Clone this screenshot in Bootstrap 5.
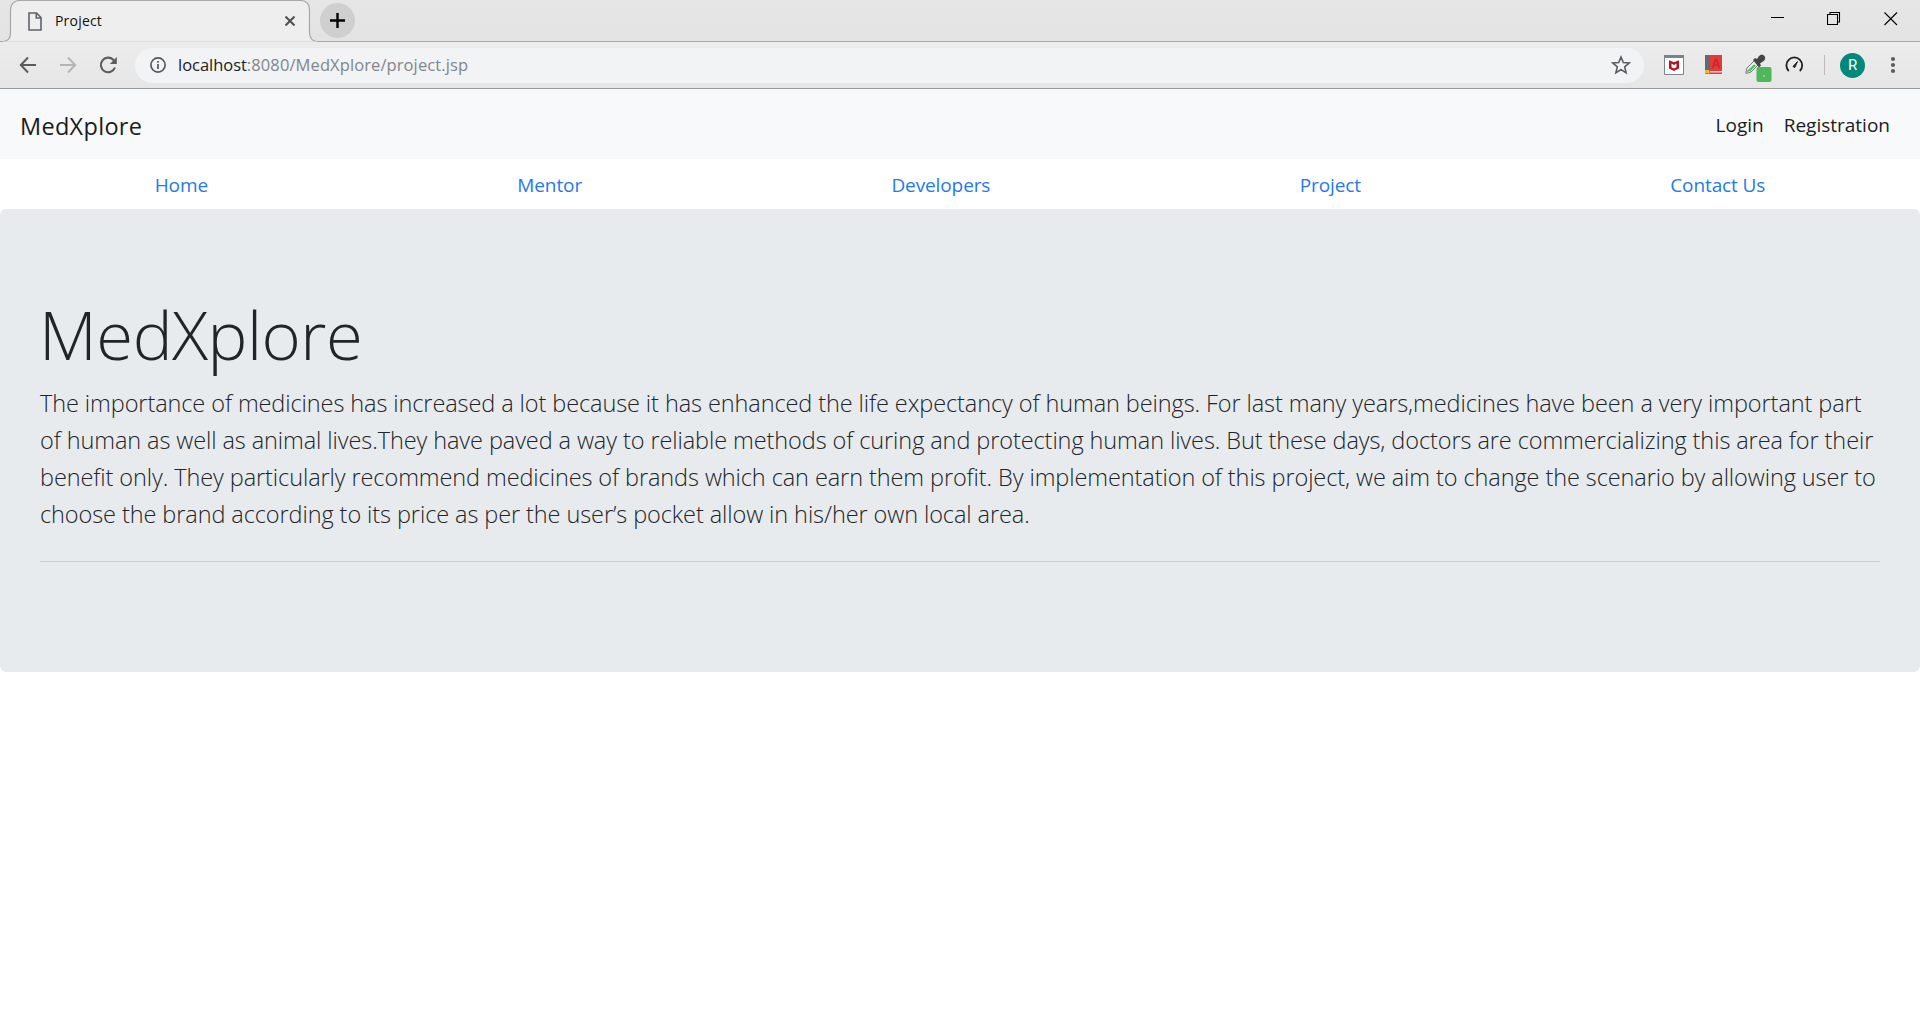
<!DOCTYPE html>
<html lang="en">
<head>
<meta charset="utf-8">
<meta name="viewport" content="width=device-width, initial-scale=1">
<title>Project</title>
<link href="https://cdn.jsdelivr.net/npm/bootstrap@5.3.0/dist/css/bootstrap.min.css" rel="stylesheet">
<style>
html{font-size:20px}
body{font-family:"Open Sans","Noto Sans",sans-serif;color:#212529;background:#fff;overflow:hidden}
svg{display:block;flex:none}
.tabstrip{height:42px;background:linear-gradient(#e6e6e6,#e3e3e3);border-bottom:1px solid #a8a8a8;line-height:1}
.tab-item{width:320px;height:42px;padding:0 25px 0 28px;margin-bottom:-1px;font-size:14px;color:#111}
.tab-frame{position:absolute;left:0;top:0}
.tab-title{letter-spacing:.2px;margin-left:13px}
.newtab{width:35px;height:35px;background:#cfcfcf;margin:3px 0 0 0}
.win-controls{gap:43px;padding-right:22px;height:37px}
.toolbar{height:47px;background:linear-gradient(#ececec,#e6e6e7);border-bottom:1px solid #98999c;padding-left:16px}
.nav-arrows{gap:16px}
.omnibox{height:35px;margin-left:15px;padding:0 13px 0 15px;border-radius:18px;background:#f1f3f5;font-size:16.5px;line-height:23px;color:#80868b}
.omnibox .host{color:#202124;letter-spacing:-.03px}
.omnibox .addr{margin-left:12px;padding-bottom:2px;letter-spacing:.1px;white-space:nowrap}
.extensions{width:276px;padding-left:20px}
.ext-next{margin-left:20px}
.ext-gauge{margin-left:12px}
.ext-menu{margin-left:25px}
.avatar-dot{width:25px;height:25px;background:#00897b;color:#fff;font:15px/25px Roboto,sans-serif;margin-left:15px}
.sep{width:1px;height:20px;background:#bbb;margin-left:20px}
.site-bar{height:70px;background:#f8f9fa;padding:10px 20px}
.site-bar .navbar-brand{font-size:23.5px;letter-spacing:.3px;color:#1b1c1d;padding-top:8px;padding-bottom:4px;line-height:36px}
.site-bar .nav-link{font-size:19px;line-height:30px;color:#1b1c1d;padding:11px 10px 9px}
.site-nav .nav-link{font-size:19px;line-height:30px;padding:11px 20px 9px;color:#2479ee;letter-spacing:-.1px}
.jumbo{background:#e8ebee;border-radius:6px;padding:80px 40px;height:463px}
.jumbo h1{font-size:67px;font-weight:300;line-height:84px;letter-spacing:-.5px;padding-top:3px;margin:0 0 9px -1px}
.jumbo p{font-size:23.5px;font-weight:300;line-height:37px;letter-spacing:-.09px;white-space:nowrap;margin:0}
.jumbo hr{margin:28px 0 0;border-top:1px solid #c9cdd0;opacity:1}
</style>
</head>
<body>
<header>
  <div class="tabstrip d-flex">
    <div class="tab-item position-relative d-flex align-items-center">
      <svg class="tab-frame" width="320" height="42" fill="#eeeeee" stroke="#a8a8a8" stroke-width="1.2"><path d="M0 41.5H3Q10.5 41 10.500 33V10Q11 .5 20 .5H300Q309.500 .5 309.500 10V33Q310 41 317 41.500H320" /><path d="M3 42h314" stroke="#eeeeee" stroke-width="1.2"/></svg>
      <svg class="position-relative" width="14" height="19" fill="none" stroke="#5f6368" stroke-width="1.6"><path d="M1 1h7.500L13 5.500V18H1zM8.300 1v5H13"/></svg>
      <span class="tab-title position-relative">Project</span>
      <svg class="position-relative ms-auto" width="10" height="10" stroke="#4d5053" stroke-width="2"><path d="M.5 .5l9 9M9.500 .5l-9 9"/></svg>
    </div>
    <div class="newtab rounded-circle d-flex align-items-center justify-content-center">
      <svg width="15" height="15" stroke="#000" stroke-width="2.400"><path d="M7.500 0v15M0 7.500h15"/></svg>
    </div>
    <div class="win-controls d-flex align-items-center ms-auto">
      <svg width="14" height="14" stroke="#000"><path d="M1 5.500h13"/></svg>
      <svg width="14" height="14" fill="none" stroke="#000" stroke-width="1.100"><path d="M.5 2.500h10v10H.5zM3 2.500V.5h9.500v9.500H10.500"/></svg>
      <svg width="14" height="14" stroke="#000" stroke-width="1.100"><path d="M.5 .5l12.500 12.500M13 .5l-12.500 12.500"/></svg>
    </div>
  </div>
  <div class="toolbar d-flex align-items-center">
    <div class="nav-arrows d-flex">
      <svg width="24" height="24" fill="none" stroke="#5a5d60" stroke-width="2"><path d="M20 12H5.500M12 4.500L4.800 12l7.200 7.500"/></svg>
      <svg width="24" height="24" fill="none" stroke="#b4b5b7" stroke-width="2"><path d="M4 12h14.500M12 4.500l7.200 7.500-7.200 7.500"/></svg>
      <svg width="24" height="24" fill="none" stroke="#5a5d60" stroke-width="2.100"><path d="M19 14.500A7.300 7.300 0 1 1 17.300 6.700L19 8.500"/><path d="M20.800 4v7h-7z" fill="#5a5d60" stroke="none"/></svg>
    </div>
    <div class="omnibox d-flex align-items-center flex-grow-1">
      <svg width="16" height="16" fill="none" stroke="#55585c" stroke-width="1.700"><circle cx="8" cy="8" r="7.100"/><path d="M8 7v5M8 4v1.800"/></svg>
      <span class="addr"><span class="host">localhost</span>:8080/MedXplore/project.jsp</span>
      <svg class="ms-auto" width="20" height="20" fill="none" stroke="#5a5d60" stroke-width="1.600"><path d="M10 2l2.300 5.500 5.900.5-4.500 3.900 1.400 5.800L10 14.600l-5.100 3.100 1.400-5.800L1.800 8l5.900-.5z"/></svg>
    </div>
    <div class="extensions d-flex align-items-center">
      <svg width="20" height="20"><path d="M.5 .5h19v19H.5z" fill="#fff" stroke="#7d858b"/><path d="M0 0h20v3H0z" fill="#72868f"/><path d="M5 5.300l5 2 5-2v8.200L10 16l-5-2.500zM7.500 8.600v3.700L10 13.500l2.500-1.200V8.600L10 9.900z" fill="#b3141d" fill-rule="evenodd"/></svg>
      <svg class="ext-next" width="20" height="20"><path d="M1 0h17v19H1z" fill="#e53a36"/><path d="M1 0h5v17H1z" fill="#656970"/><path d="M6 16h12v1.500H5z" fill="#f3d9d7"/><path d="M1 15h4v4l-2-1-2 1z" fill="#f3b62f"/><path d="M8.500 13L11.500 4.500h1L15.500 13M9.500 10h5" fill="none" stroke="#c42927" stroke-width="1.500"/></svg>
      <svg class="ext-next" width="28" height="36"><path d="M2 25l1-4 8-8 4 4-8 8-5 1.500z" fill="#e9eeea" stroke="#777" stroke-width="1"/><path d="M3 24l7-6.500 2 1L6.500 24 3 25z" fill="#4fbd62"/><path d="M9 13l2-2 2 1 2-3q3-3 5.500 0 2 3-1.500 5.500l-3 2 1 2-2 2z" fill="#434649"/><rect x="12.500" y="20" width="15" height="15" rx="2" fill="#4db858"/><circle cx="20" cy="29" r=".8" fill="#d8f0da"/></svg>
      <svg class="ext-gauge" width="20" height="20" fill="none" stroke="#1e1f20" stroke-width="1.800"><path d="M4.800 16A7.900 7.900 0 1 1 15.800 16"/><path d="M9 11.500l4.500-5-2.700 6z" fill="#1e1f20" stroke-width="1"/></svg>
      <div class="sep"></div>
      <div class="avatar-dot rounded-circle text-center">R</div>
      <svg class="ext-menu" width="6" height="18" fill="#5a5d60"><circle cx="3" cy="3" r="2.100"/><circle cx="3" cy="9" r="2.100"/><circle cx="3" cy="15" r="2.100"/></svg>
    </div>
  </div>
</header>

<nav class="navbar site-bar d-flex flex-nowrap align-items-center">
  <a class="navbar-brand" href="#">MedXplore</a>
  <div class="d-flex ms-auto">
    <a class="nav-link" href="#">Login</a>
    <a class="nav-link" href="#">Registration</a>
  </div>
</nav>

<ul class="nav nav-fill site-nav">
  <li class="nav-item"><a class="nav-link" href="#">Home</a></li>
  <li class="nav-item"><a class="nav-link" href="#">Mentor</a></li>
  <li class="nav-item"><a class="nav-link" href="#">Developers</a></li>
  <li class="nav-item"><a class="nav-link" href="#">Project</a></li>
  <li class="nav-item"><a class="nav-link" href="#">Contact Us</a></li>
</ul>

<main class="jumbo">
  <h1>MedXplore</h1>
  <p>The importance of medicines has increased a lot because it has enhanced the life expectancy of human beings. For last many years,medicines have been a very important part<br>of human as well as animal lives.They have paved a way to reliable methods of curing and protecting human lives. But these days, doctors are commercializing this area for their<br>benefit only. They particularly recommend medicines of brands which can earn them profit. By implementation of this project, we aim to change the scenario by allowing user to<br>choose the brand according to its price as per the user’s pocket allow in his/her own local area.</p>
  <hr>
</main>
<script src="https://cdn.jsdelivr.net/npm/bootstrap@5.3.0/dist/js/bootstrap.bundle.min.js"></script>
</body>
</html>
